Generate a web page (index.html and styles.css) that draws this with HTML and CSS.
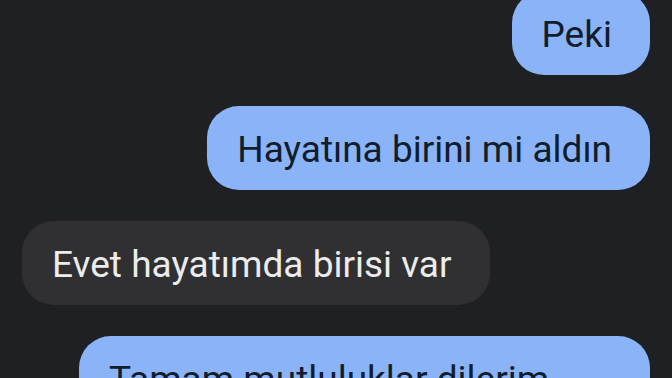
FILE: index.html
```html
<!DOCTYPE html>
<html lang="tr">
<head>
  <meta charset="UTF-8">
  <meta name="viewport" content="width=device-width, initial-scale=1.0">
  <title>Mesajlar</title>
  <link rel="stylesheet" href="styles.css">
</head>
<body>
  <!-- Conversation -->
  <div class="thread">
    <div class="msg sent">Peki</div>
    <div class="msg sent">Hayatına birini mi aldın</div>
    <div class="msg received">Evet hayatımda birisi var</div>
    <div class="msg sent long">Tamam mutluluklar dilerim</div>
  </div>
</body>
</html>
```

FILE: styles.css
```css
body {
  margin: 0;
  padding: 0;
  background-color: #1f2023;
  font-family: Roboto, "Noto Sans", sans-serif;
  overflow: hidden;
}


.thread {
  display: flex;
  flex-direction: column;
  gap: 31px;
  padding: 0 22px;
  margin-top: -9px;
}

.msg {
  max-width: 560px;
  padding: 22px 38px 18px 30px;
  border-radius: 32px;
  font-size: 37px;
  line-height: 44px;
  white-space: nowrap;
}

.sent {
  align-self: flex-end;
  background-color: #8ab4f7;
  color: #111c2c;
}

.received {
  align-self: flex-start;
  background-color: #303033;
  color: #ececec;
}

.long {
  box-sizing: border-box;
  width: 571px;
  max-width: none;
}
```
